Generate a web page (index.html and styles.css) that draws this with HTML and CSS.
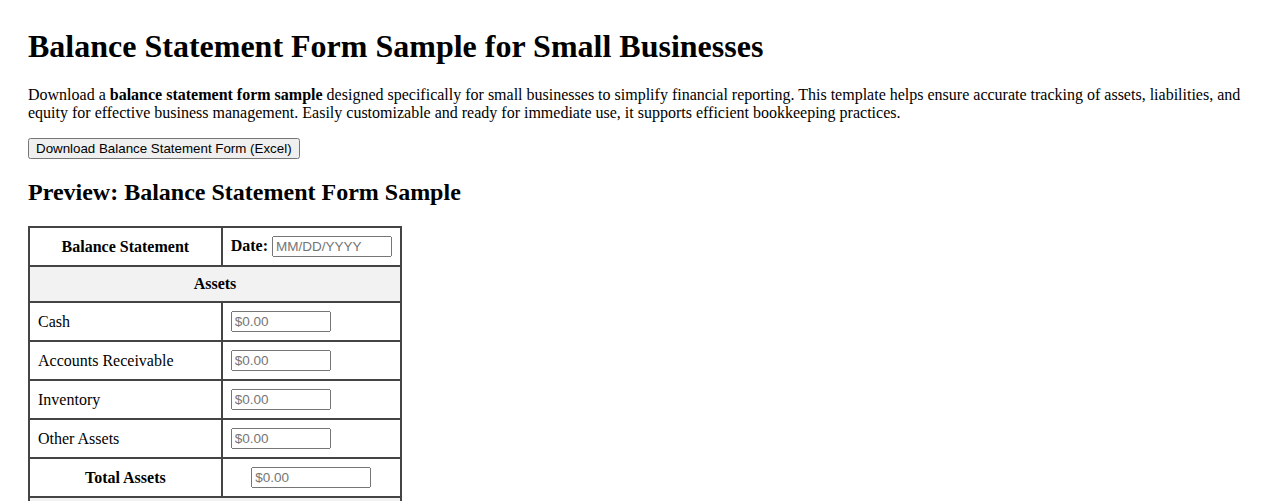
FILE: index.html
```html
<!DOCTYPE html>
<html lang="en">
<head>
    <meta charset="UTF-8">
    <meta name="viewport" content="width=device-width, initial-scale=1.0">
    <title>Balance Statement Form Sample for Small Businesses</title>
    <link rel="stylesheet" href="styles.css">
</head>
<body>
    <h1>Balance Statement Form Sample for Small Businesses</h1>

    <p>Download a <strong>balance statement form sample</strong> designed specifically for small businesses to simplify financial reporting. This template helps ensure accurate tracking of assets, liabilities, and equity for effective business management. Easily customizable and ready for immediate use, it supports efficient bookkeeping practices.</p>

    <button type="button" class="download-btn">Download Balance Statement Form (Excel)</button>

    <h2>Preview: Balance Statement Form Sample</h2>

    <table class="statement">
        <tr>
            <th>Balance Statement</th>
            <td class="date-cell"><strong>Date:</strong> <input type="text" class="date-input" placeholder="MM/DD/YYYY"></td>
        </tr>
        <tr>
            <th colspan="2" class="section">Assets</th>
        </tr>
        <tr>
            <td>Cash</td>
            <td><input type="text" class="amount" placeholder="$0.00"></td>
        </tr>
        <tr>
            <td>Accounts Receivable</td>
            <td><input type="text" class="amount" placeholder="$0.00"></td>
        </tr>
        <tr>
            <td>Inventory</td>
            <td><input type="text" class="amount" placeholder="$0.00"></td>
        </tr>
        <tr>
            <td>Other Assets</td>
            <td><input type="text" class="amount" placeholder="$0.00"></td>
        </tr>
        <tr class="total">
            <th>Total Assets</th>
            <td><input type="text" class="amount total-amount" placeholder="$0.00"></td>
        </tr>
        <tr>
            <th colspan="2" class="section">Liabilities</th>
        </tr>
        <tr>
            <td>Accounts Payable</td>
            <td><input type="text" class="amount" placeholder="$0.00"></td>
        </tr>
        <tr>
            <td>Loans Payable</td>
            <td><input type="text" class="amount" placeholder="$0.00"></td>
        </tr>
        <tr>
            <td>Other Liabilities</td>
            <td><input type="text" class="amount" placeholder="$0.00"></td>
        </tr>
        <tr class="total">
            <th>Total Liabilities</th>
            <td><input type="text" class="amount total-amount" placeholder="$0.00"></td>
        </tr>
        <tr>
            <th colspan="2" class="section">Equity</th>
        </tr>
        <tr>
            <td>Owner's Equity</td>
            <td><input type="text" class="amount" placeholder="$0.00"></td>
        </tr>
        <tr>
            <td>Retained Earnings</td>
            <td><input type="text" class="amount" placeholder="$0.00"></td>
        </tr>
        <tr class="total">
            <th>Total Equity</th>
            <td><input type="text" class="amount total-amount" placeholder="$0.00"></td>
        </tr>
    </table>
</body>
</html>
```

FILE: styles.css
```css
body {
    font-family: "Liberation Serif", "Times New Roman", serif;
    font-size: 16px;
    color: #000;
    background: #fff;
    margin: 0;
    padding: 28px;
}

h1 {
    font-size: 32px;
    margin: 0 0 21px;
}

h2 {
    font-size: 24px;
    margin: 20px 0;
}

p {
    margin: 0 0 16px;
}

.download-btn {
    font-family: "Liberation Sans", Arial, sans-serif;
    font-size: 13.33px;
}

.statement {
    width: 374px;
    border: 1px solid #444;
    border-spacing: 0;
}

.statement th,
.statement td {
    border: 1px solid #444;
    padding: 8px;
    text-align: left;
}

.statement th {
    text-align: center;
}

.statement tr > :first-child {
    width: 175px;
}

.statement .date-cell {
    white-space: nowrap;
}

.statement .section {
    background: #f2f2f2;
}

.statement .total td {
    text-align: center;
}

.statement input {
    font-family: "Liberation Sans", Arial, sans-serif;
    font-size: 13.5px;
    box-sizing: border-box;
    height: 21px;
}

.amount {
    width: 100px;
}

.total-amount {
    width: 120px;
}

.date-input {
    width: 120px;
}
```
